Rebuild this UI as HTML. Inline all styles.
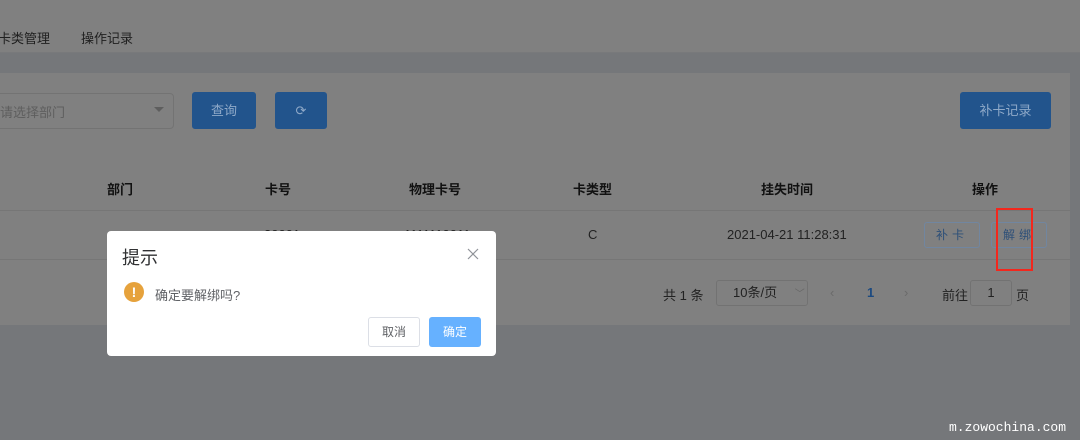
<!DOCTYPE html>
<html><head><meta charset="utf-8"><style>
*{margin:0;padding:0;box-sizing:border-box}
body{width:1080px;height:440px;overflow:hidden;background:#75777a;font-family:"Liberation Sans","Noto Sans CJK SC",sans-serif;position:relative;font-size:13px;color:#1a1a1a}
.a{position:absolute}
.top{left:0;top:0;width:1080px;height:53px;background:#808080;border-bottom:1px solid #78797b}
.card{left:0;top:73px;width:1070px;height:252px;background:#808080}
.btn{background:#22548c;color:#8fa9c8;border-radius:3px;text-align:center}
.th{top:179px;font-weight:bold;font-size:13px;color:#111}
.ob{border:1px solid #7186a0;border-radius:3px;color:#2d4f78;text-align:center;font-size:12px;line-height:24px;height:26px;letter-spacing:4px}
.dlg{left:107px;top:231px;width:389px;height:125px;background:#fff;border-radius:4px}
</style></head><body>
<div class="a top"></div>
<div class="a" style="left:-2px;top:28px;font-size:13px;color:#1f1f1f">卡类管理</div>
<div class="a" style="left:81px;top:28px;font-size:13px;color:#1f1f1f">操作记录</div>
<div class="a card"></div>
<div class="a" style="left:-10px;top:93px;width:184px;height:36px;border:1px solid #737373;border-radius:4px"></div>
<div class="a" style="left:0;top:102px;color:#5e5e5e;font-size:13px">请选择部门</div>
<div class="a" style="left:154px;top:107px;width:0;height:0;border:5px solid transparent;border-top:5px solid #5e5e5e"></div>
<div class="a btn" style="left:192px;top:92px;width:64px;height:37px;line-height:37px">查询</div>
<div class="a btn" style="left:275px;top:92px;width:52px;height:37px;line-height:37px;font-size:13px">⟳</div>
<div class="a btn" style="left:960px;top:92px;width:91px;height:37px;line-height:37px">补卡记录</div>
<div class="a th" style="left:107px">部门</div>
<div class="a th" style="left:265px">卡号</div>
<div class="a th" style="left:409px">物理卡号</div>
<div class="a th" style="left:573px">卡类型</div>
<div class="a th" style="left:761px">挂失时间</div>
<div class="a th" style="left:972px">操作</div>
<div class="a" style="left:0;top:210px;width:1070px;height:1px;background:#767676"></div>
<div class="a" style="left:0;top:259px;width:1070px;height:1px;background:#767676"></div>
<div class="a" style="left:264px;top:227px;color:#222">20001</div>
<div class="a" style="left:404px;top:227px;color:#222">1111110011</div>
<div class="a" style="left:588px;top:227px;color:#222">C</div>
<div class="a" style="left:727px;top:227px;color:#222">2021-04-21 11:28:31</div>
<div class="a ob" style="left:924px;top:222px;width:56px">补卡</div>
<div class="a ob" style="left:991px;top:222px;width:56px">解绑</div>
<div class="a" style="left:996px;top:208px;width:37px;height:63px;border:2px solid #f3271d"></div>
<div class="a" style="left:663px;top:285px;color:#222">共 1 条</div>
<div class="a" style="left:716px;top:280px;width:92px;height:26px;border:1px solid #727272;border-radius:3px;padding-left:16px;line-height:24px;color:#222">10条/页 <span style="margin-left:14px;color:#666;font-size:10px">﹀</span></div>
<div class="a" style="left:830px;top:285px;color:#6a6a6a">‹</div>
<div class="a" style="left:867px;top:285px;color:#1c4a80;font-weight:bold">1</div>
<div class="a" style="left:904px;top:285px;color:#6a6a6a">›</div>
<div class="a" style="left:942px;top:285px;color:#222">前往</div>
<div class="a" style="left:970px;top:280px;width:42px;height:26px;border:1px solid #727272;border-radius:3px;text-align:center;line-height:24px;color:#222">1</div>
<div class="a" style="left:1016px;top:285px;color:#222">页</div>
<div class="a dlg"></div>
<div class="a" style="left:122px;top:244px;font-size:18px;color:#303133">提示</div>
<svg class="a" style="left:467px;top:248px" width="12" height="12"><path d="M1 1L11 11M11 1L1 11" stroke="#909399" stroke-width="1.2"/></svg>
<div class="a" style="left:124px;top:282px;width:20px;height:20px;border-radius:50%;background:#e6a23c;color:#fff;font-weight:bold;text-align:center;line-height:20px;font-size:14px">!</div>
<div class="a" style="left:155px;top:285px;color:#606266">确定要解绑吗?</div>
<div class="a" style="left:368px;top:317px;width:52px;height:30px;border:1px solid #dcdfe6;border-radius:3px;text-align:center;line-height:28px;font-size:12px;color:#606266">取消</div>
<div class="a" style="left:429px;top:317px;width:52px;height:30px;background:#66b1ff;border-radius:3px;text-align:center;line-height:30px;font-size:12px;color:#fff">确定</div>
<div class="a" style="left:949px;top:420px;font-family:'Liberation Mono',monospace;font-size:13px;color:#fff">m.zowochina.com</div>
</body></html>
